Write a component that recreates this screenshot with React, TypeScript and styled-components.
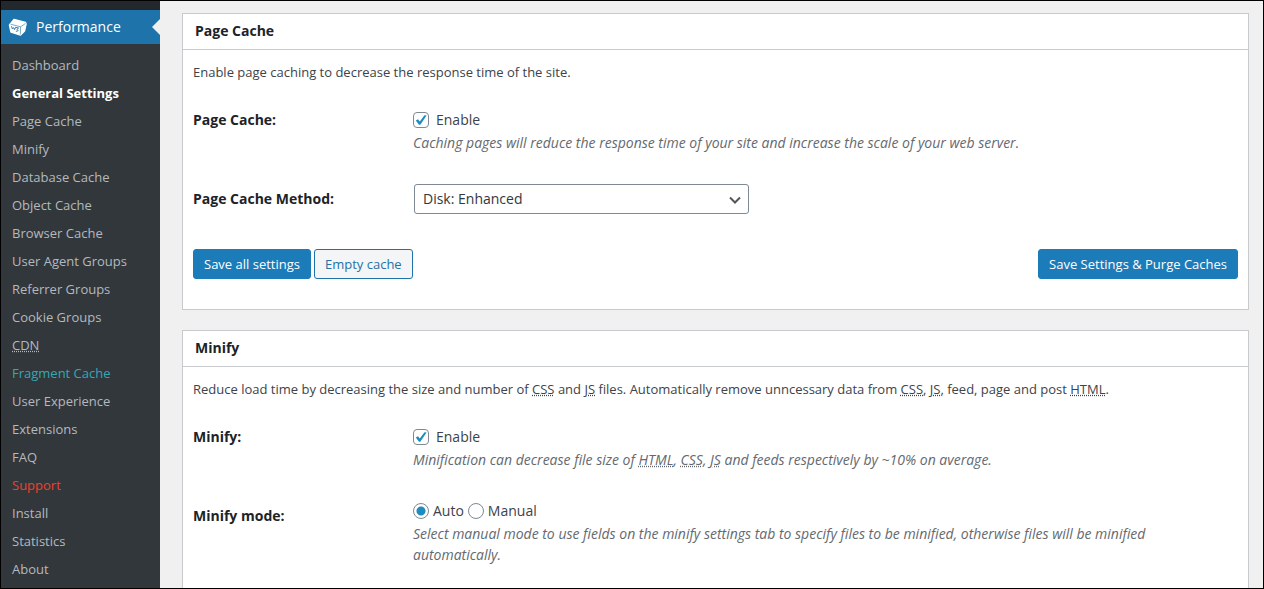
import React, { useState } from 'react';
import styled, { createGlobalStyle, css } from 'styled-components';

const GlobalStyle = createGlobalStyle`
  *, *::before, *::after { box-sizing: border-box; }
  body {
    margin: 0;
    background: #f0f0f0;
    color: #3c434a;
    font-family: "Open Sans", "Noto Sans", sans-serif;
    font-size: 13px;
    line-height: 20px;
  }
  button, select, input { font: inherit; }
`;

const Frame = styled.div`
  display: flex;
  height: 100vh;
  border: 1px solid #000;
  overflow: hidden;
`;

const Sidebar = styled.nav`
  flex: 0 0 159px;
  padding-top: 9px;
  background: #23282d;
  display: flex;
  flex-direction: column;
`;

const MenuHeader = styled.a`
  position: relative;
  flex: none;
  display: flex;
  align-items: center;
  gap: 8px;
  height: 34px;
  padding-left: 7px;
  background: #1e73aa;
  color: #fff;
  font-size: 14px;
  text-decoration: none;

  &::after {
    content: "";
    position: absolute;
    top: 9px;
    right: 0;
    border: 8px solid transparent;
    border-left-width: 0;
    border-right-color: #f0f0f0;
  }
`;

const Submenu = styled.ul`
  flex: 1;
  margin: 0;
  padding: 7px 0;
  list-style: none;
  background: #32373c;
`;

type Tone = 'normal' | 'current' | 'teal' | 'red';

const tones: Record<Tone, string> = {
  normal: '#b4b9be',
  current: '#fff',
  teal: '#35a8b3',
  red: '#f0402c',
};

const SubmenuLink = styled.a<{ $tone: Tone }>`
  display: block;
  padding: 4px 11px;
  color: ${(p) => tones[p.$tone]};
  font-weight: ${(p) => (p.$tone === 'current' ? 700 : 400)};
  text-decoration: none;
`;

const Abbr = styled.abbr`
  text-decoration: underline dotted;
`;

const Main = styled.main`
  flex: 1;
  min-width: 0;
  padding: 12px 14px 0 22px;
  overflow: hidden;
`;

const Card = styled.section`
  margin-bottom: 20px;
  border: 1px solid #c8cbce;
  background: #fff;
`;

const CardTitle = styled.h3`
  margin: 0;
  padding: 7px 12px 8px;
  border-bottom: 1px solid #c8cbce;
  color: #1d2327;
  font-size: 14px;
  line-height: 20px;
`;

const CardBody = styled.div`
  padding: 12px 10px 30px;
`;

const Intro = styled.p`
  margin: 0 0 12px;
`;

const Row = styled.div`
  display: grid;
  grid-template-columns: 200px minmax(0, 1fr);
  column-gap: 20px;
  padding: 11px 0 20px;
  font-size: 14px;
`;

const RowLabel = styled.div`
  padding-top: 5px;
  color: #1d2327;
  font-weight: 700;
`;

const Field = styled.div<{ $offset?: boolean }>`
  max-width: 770px;
  padding-top: ${(p) => (p.$offset ? 5 : 0)}px;
`;

const Choices = styled.div`
  display: flex;
  gap: 4px;
`;

const Choice = styled.label<{ $gap: number }>`
  display: flex;
  align-items: center;
  gap: ${(p) => p.$gap}px;
`;

const Control = styled.span`
  position: relative;
  display: flex;
  width: 16px;
  height: 16px;

  svg {
    position: absolute;
    inset: 0;
    pointer-events: none;
  }
`;

const controlBox = css`
  appearance: none;
  width: 16px;
  height: 16px;
  margin: 0;
  border: 1px solid #7e8993;
  background: #fff;
`;

const CheckInput = styled.input`
  ${controlBox}
  border-radius: 4px;
`;

const RadioInput = styled.input`
  ${controlBox}
  border-radius: 50%;

  &:checked {
    background: radial-gradient(circle, #1e8cbe 4px, #fff 5px);
  }
`;

const Description = styled.p`
  margin: 2px 0 0;
  color: #646970;
  font-style: italic;
  line-height: 21px;
`;

const SelectWrap = styled.div`
  position: relative;
  width: 335px;
  margin-left: 1px;

  svg {
    position: absolute;
    top: 8px;
    right: 6px;
    pointer-events: none;
  }
`;

const Select = styled.select`
  appearance: none;
  display: block;
  width: 100%;
  height: 30px;
  padding: 0 24px 0 8px;
  border: 1px solid #7e8993;
  border-radius: 3px;
  background: #fff;
  color: #32373c;
  font-size: 14px;
`;

const Actions = styled.div`
  display: flex;
  gap: 3px;
  padding-top: 15px;
`;

const Button = styled.button<{ $secondary?: boolean; $end?: boolean }>`
  height: 30px;
  padding: 0 10px;
  margin-left: ${(p) => (p.$end ? 'auto' : '0')};
  border: 1px solid ${(p) => (p.$secondary ? '#1e73aa' : '#1c7bb9')};
  border-radius: 3px;
  background: ${(p) => (p.$secondary ? '#f3f5f6' : '#1c7bb9')};
  color: ${(p) => (p.$secondary ? '#1e73aa' : '#fff')};
  white-space: nowrap;
`;

function CubeIcon() {
  return (
    <svg width="20" height="20" viewBox="0 0 20 20" aria-hidden="true">
      <path d="M6 2.500 17.500 5.500 18 7 16.500 14 12.500 18 3 15 1.500 8Z" fill="#fff" stroke="#fff" strokeWidth="1.500" strokeLinejoin="round" />
      <path d="M2.500 7.200 12.600 9.800 17.500 6.500M12.600 9.800 12.300 17.500" fill="none" stroke="#1e73aa" strokeWidth="0.600" />
      <path d="M3.500 9.200 4.400 12 5.600 10.600 6.600 12.600 7.600 10.300 10.600 11 8.900 12.300 10.200 13.600 7.900 14.500" fill="none" stroke="#1e73aa" strokeWidth="0.900" />
    </svg>
  );
}

function CheckBox({ id }: { id: string }) {
  const [on, setOn] = useState(true);
  return (
    <Control>
      <CheckInput id={id} type="checkbox" checked={on} onChange={(e) => setOn(e.target.checked)} />
      {on && (
        <svg width="16" height="16" viewBox="0 0 16 16" aria-hidden="true">
          <path d="M2.800 8.600 5 7.200 6.800 9.600 11.500 3.200 13.600 3.600 7.300 12.800 6 12.800Z" fill="#1e8cbe" />
        </svg>
      )}
    </Control>
  );
}

const menu: { label: React.ReactNode; tone?: Tone }[] = [
  { label: 'Dashboard' },
  { label: 'General Settings', tone: 'current' },
  { label: 'Page Cache' },
  { label: 'Minify' },
  { label: 'Database Cache' },
  { label: 'Object Cache' },
  { label: 'Browser Cache' },
  { label: 'User Agent Groups' },
  { label: 'Referrer Groups' },
  { label: 'Cookie Groups' },
  { label: <Abbr>CDN</Abbr> },
  { label: 'Fragment Cache', tone: 'teal' },
  { label: 'User Experience' },
  { label: 'Extensions' },
  { label: 'FAQ' },
  { label: 'Support', tone: 'red' },
  { label: 'Install' },
  { label: 'Statistics' },
  { label: 'About' },
];

export default function App() {
  const [mode, setMode] = useState('auto');
  return (
    <>
      <GlobalStyle />
      <Frame>
        <Sidebar>
          <MenuHeader href="#performance">
            <CubeIcon />
            Performance
          </MenuHeader>
          <Submenu>
            {menu.map((item, i) => (
              <li key={i}>
                <SubmenuLink href="#" $tone={item.tone ?? 'normal'}>{item.label}</SubmenuLink>
              </li>
            ))}
          </Submenu>
        </Sidebar>
        <Main>
          <Card>
            <CardTitle>Page Cache</CardTitle>
            <CardBody>
              <Intro>Enable page caching to decrease the response time of the site.</Intro>
              <Row>
                <RowLabel>Page Cache:</RowLabel>
                <Field $offset>
                  <Choices>
                    <Choice htmlFor="page-cache" $gap={7}>
                      <CheckBox id="page-cache" />
                      Enable
                    </Choice>
                  </Choices>
                  <Description>
                    Caching pages will reduce the response time of your site and increase the scale of your web server.
                  </Description>
                </Field>
              </Row>
              <Row>
                <RowLabel as="label" htmlFor="method">Page Cache Method:</RowLabel>
                <SelectWrap>
                  <Select id="method">
                    <option>Disk: Enhanced</option>
                  </Select>
                  <svg width="16" height="16" viewBox="0 0 16 16" aria-hidden="true">
                    <path d="M3 5.500 8 10.500 13 5.500" fill="none" stroke="#555" strokeWidth="2" />
                  </svg>
                </SelectWrap>
              </Row>
              <Actions>
                <Button type="button">Save all settings</Button>
                <Button type="button" $secondary>Empty cache</Button>
                <Button type="button" $end>Save Settings &amp; Purge Caches</Button>
              </Actions>
            </CardBody>
          </Card>
          <Card>
            <CardTitle>Minify</CardTitle>
            <CardBody>
              <Intro>
                Reduce load time by decreasing the size and number of <Abbr>CSS</Abbr> and <Abbr>JS</Abbr> files.
                Automatically remove unncessary data from <Abbr>CSS</Abbr>, <Abbr>JS</Abbr>, feed, page and post{' '}
                <Abbr>HTML</Abbr>.
              </Intro>
              <Row>
                <RowLabel>Minify:</RowLabel>
                <Field $offset>
                  <Choices>
                    <Choice htmlFor="minify" $gap={7}>
                      <CheckBox id="minify" />
                      Enable
                    </Choice>
                  </Choices>
                  <Description>
                    Minification can decrease file size of <Abbr>HTML</Abbr>, <Abbr>CSS</Abbr>, <Abbr>JS</Abbr> and
                    feeds respectively by ~10% on average.
                  </Description>
                </Field>
              </Row>
              <Row>
                <RowLabel>Minify mode:</RowLabel>
                <Field>
                  <Choices role="radiogroup" aria-label="Minify mode">
                    {['auto', 'manual'].map((m) => (
                      <Choice key={m} $gap={4}>
                        <RadioInput type="radio" name="mode" checked={mode === m} onChange={() => setMode(m)} />
                        {m === 'auto' ? 'Auto' : 'Manual'}
                      </Choice>
                    ))}
                  </Choices>
                  <Description>
                    Select manual mode to use fields on the minify settings tab to specify files to be minified,
                    otherwise files will be minified automatically.
                  </Description>
                </Field>
              </Row>
            </CardBody>
          </Card>
        </Main>
      </Frame>
    </>
  );
}
